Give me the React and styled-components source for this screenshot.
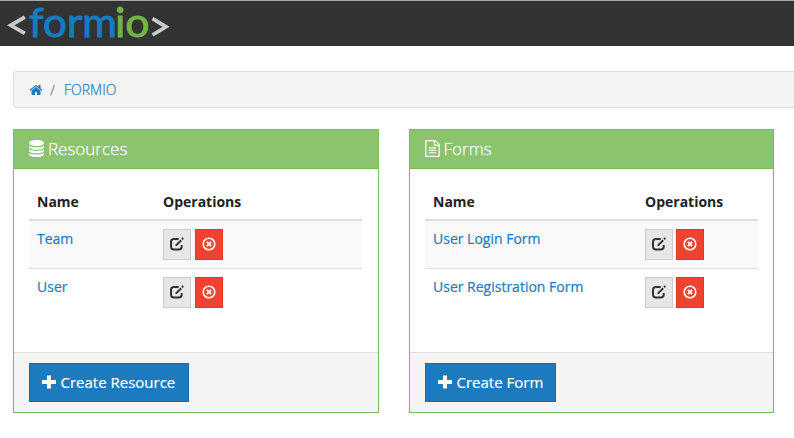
import React from "react";
import styled, { createGlobalStyle } from "styled-components";

const Global = createGlobalStyle`
  * { box-sizing: border-box; }
  html, body { margin: 0; padding: 0; background: #fff; overflow: hidden; }
  body { font: 400 14px/20px "Open Sans", sans-serif; color: #222; }
  a { color: #1c7abe; text-decoration: none; -webkit-text-stroke: 0.2px currentColor; }
  svg { display: block; flex: none; }
`;

const Page = styled.div`
  height: 438px;
  overflow: hidden;
`;
const Navbar = styled.header`
  height: 46px;
  background: #333;
  border-top: 1px solid #a3a8a5;
`;
const LogoArt = styled.svg`
  margin-top: -1px;
  overflow: visible;
  font-family: Lato, sans-serif;
  font-weight: 400;
`;
const Breadcrumb = styled.nav`
  display: flex;
  align-items: center;
  height: 37px;
  margin: 25px -10px 0 13px;
  padding-left: 15px;
  background: #f4f4f4;
  border: 1px solid #dcdcdc;
  border-radius: 3px;
  font-weight: 300;
`;
const Separator = styled.span`
  width: 5px;
  margin: 0 9px 0 7px;
  color: #888;
  font-weight: 400;
`;
const Crumb = styled.a`
  font-size: 14px;
`;
const Columns = styled.main`
  display: grid;
  grid-template-columns: 366px 365px;
  column-gap: 30px;
  margin: 21px 0 0 13px;
`;
const Panel = styled.section`
  display: flex;
  flex-direction: column;
  height: 284px;
  border: 1px solid #7cba5c;
`;
const PanelHeading = styled.h2`
  display: flex;
  align-items: center;
  gap: 4px;
  height: 39px;
  margin: 0;
  padding: 0 15px 1px ${(p) => p.$inset}px;
  background: #8cc36e;
  border-bottom: 1px solid #79b957;
  color: #fff;
  font-size: 17px;
  font-weight: 300;
  -webkit-text-stroke: 0.25px #fff;
`;
const PanelBody = styled.div`
  flex: 1;
  padding: 15px 15px 0 15px;
`;
const Grid = styled.div`
  display: grid;
  grid-template-columns: ${(p) => p.$name}px 1fr;
  max-width: 333px;
`;
const HeadRow = styled(Grid)`
  height: 37px;
  padding: 8px 8px 0;
  border-bottom: 2px solid #ddd;
  font-weight: 700;
`;
const Row = styled(Grid)`
  height: ${(p) => (p.$striped ? 47 : 48)}px;
  padding: 8px 8px 0;
  background: ${(p) => (p.$striped ? "#f9f9f9" : "#fff")};
  & + & { border-top: 1px solid #ddd; }
`;
const Actions = styled.div`
  display: flex;
  gap: ${(p) => p.$gap}px;
`;
const IconButton = styled.button`
  display: flex;
  align-items: center;
  justify-content: center;
  width: 28px;
  height: 31px;
  padding: 0 0 1px;
  color: ${(p) => (p.$danger ? "#fff" : "#333")};
  background: ${(p) => (p.$danger ? "#ef432f" : "#e7e7e7")};
  border: 1px solid ${(p) => (p.$danger ? "#df3925" : "#cbcbcb")};
`;
const PanelFooter = styled.footer`
  height: 60px;
  padding: 10px 15px;
  background: #f4f4f4;
  border-top: 1px solid #ddd;
`;
const CreateButton = styled.button`
  display: flex;
  align-items: center;
  gap: 4.5px;
  width: ${(p) => p.$w}px;
  height: 39px;
  padding: 0 0 1px 12px;
  color: #fff;
  background: #1c7abe;
  border: 1px solid #186ba7;
  font: 400 15px/20px "Open Sans", sans-serif;
  -webkit-text-stroke: 0.2px #fff;
  white-space: nowrap;
`;

function Logo() {
  return (
    <LogoArt width="180" height="46" viewBox="0 0 180 46">
      <g fill="none" stroke="#c9cacc" strokeWidth="3.8">
        <path d="M24.8 17.2L10.8 25.3L24.8 33.3" />
        <path d="M152.5 18.7L166 26.8L152.5 35" />
      </g>
      <text x="29" y="36.8" fontSize="40" fill="#147bc5" stroke="#147bc5" strokeWidth=".9" textLength="88" lengthAdjust="spacingAndGlyphs">form</text>
      <text x="115" y="36.8" fontSize="40" fill="#70b444" stroke="#70b444" strokeWidth=".9" textLength="34.500" lengthAdjust="spacingAndGlyphs">io</text>
      <circle cx="120.200" cy="10.200" r="3" fill="#70b444" />
    </LogoArt>
  );
}
const HomeIcon = () => (
  <svg width="14" height="14" viewBox="0 0 1792 1792" fill="#1c7abe">
    <path d="M1472 992v480q0 26-19 45t-45 19h-384v-384h-256v384h-384q-26 0-45-19t-19-45v-480q0-1 .5-3t.5-3l575-474 575 474q1 2 1 6zm223-69l-62 74q-8 9-21 11h-3q-13 0-21-7l-692-577-692 577q-12 8-24 7-13-2-21-11l-62-74q-8-10-7-23.5t11-21.5l719-599q32-26 76-26t76 26l244 204v-195q0-14 9-23t23-9h192q14 0 23 9t9 23v408l219 182q10 8 11 21.5t-7 23.5z" />
  </svg>
);
const DatabaseIcon = () => (
  <svg width="15" height="17" viewBox="128 0 1536 1792" fill="#fff">
    <path d="M896 768q237 0 443-43t325-127v170q0 69-103 128t-280 93.5-385 34.5-385-34.5-280-93.5-103-128v-170q119 84 325 127t443 43zm0 768q237 0 443-43t325-127v170q0 69-103 128t-280 93.5-385 34.5-385-34.5-280-93.5-103-128v-170q119 84 325 127t443 43zm0-384q237 0 443-43t325-127v170q0 69-103 128t-280 93.5-385 34.5-385-34.5-280-93.5-103-128v-170q119 84 325 127t443 43zm0-1152q208 0 385 34.5t280 93.5 103 128v128q0 69-103 128t-280 93.5-385 34.5-385-34.5-280-93.5-103-128v-128q0-69 103-128t280-93.5 385-34.5z" />
  </svg>
);
const FileIcon = () => (
  <svg width="15" height="17" viewBox="128 0 1536 1792" fill="#fff">
    <path d="M1596 380q28 28 48 76t20 88v1152q0 40-28 68t-68 28h-1344q-40 0-68-28t-28-68v-1600q0-40 28-68t68-28h896q40 0 88 20t76 48zm-444-244v376h376q-10-29-22-41l-313-313q-12-12-41-22zm384 1528v-1024h-416q-40 0-68-28t-28-68v-416h-768v1536h1280zm-1024-864q0-14 9-23t23-9h704q14 0 23 9t9 23v64q0 14-9 23t-23 9h-704q-14 0-23-9t-9-23v-64zm736 224q14 0 23 9t9 23v64q0 14-9 23t-23 9h-704q-14 0-23-9t-9-23v-64q0-14 9-23t23-9h704zm0 256q14 0 23 9t9 23v64q0 14-9 23t-23 9h-704q-14 0-23-9t-9-23v-64q0-14 9-23t23-9h704z" />
  </svg>
);
const EditIcon = () => (
  <svg width="14" height="14" viewBox="0 0 14 14" fill="none" stroke="currentColor">
    <path d="M8.7 2H4Q1 2 1 5v4.800Q1 12.500 4 12.500h4.700Q11.700 12.500 11.700 9.800V7.900" strokeWidth="2" />
    <path d="M6.3 8.1L11.2 3.2" strokeWidth="2" />
    <path d="M5.3 9.2l.5-2.2 1.7 1.7z" fill="currentColor" stroke="none" />
    <path d="M12 2.3L13.3 1" strokeWidth="2" />
  </svg>
);
const RemoveIcon = () => (
  <svg width="14" height="14" viewBox="0 0 14 14" fill="none" stroke="currentColor">
    <circle cx="7" cy="7" r="5.8" strokeWidth="1.6" />
    <path d="M4.900 4.900l4.200 4.200M9.100 4.900L4.900 9.100" strokeWidth="2" />
  </svg>
);
const PlusIcon = () => (
  <svg width="14" height="14" viewBox="0 0 14 14" fill="#fff">
    <path d="M5 .5h4V5h5v4H9v4.500H5V9H0V5h5z" />
  </svg>
);

function ListPanel({ icon, title, inset, items, nameWidth, gap, action, actionWidth }) {
  return (
    <Panel>
      <PanelHeading $inset={inset}>{icon}{title}</PanelHeading>
      <PanelBody>
        <HeadRow $name={nameWidth}><span>Name</span><span>Operations</span></HeadRow>
        {items.map((item, i) => (
          <Row key={item} $name={nameWidth} $striped={i % 2 === 0}>
            <a href="#">{item}</a>
            <Actions $gap={gap}>
              <IconButton aria-label="Edit"><EditIcon /></IconButton>
              <IconButton $danger aria-label="Delete"><RemoveIcon /></IconButton>
            </Actions>
          </Row>
        ))}
      </PanelBody>
      <PanelFooter>
        <CreateButton $w={actionWidth}><PlusIcon />{action}</CreateButton>
      </PanelFooter>
    </Panel>
  );
}

export default function App() {
  return (
    <Page>
      <Global />
      <Navbar><Logo /></Navbar>
      <Breadcrumb>
        <HomeIcon />
        <Separator>/</Separator>
        <Crumb href="#">FORMIO</Crumb>
      </Breadcrumb>
      <Columns>
        <ListPanel icon={<DatabaseIcon />} title="Resources" inset={15} items={["Team", "User"]} nameWidth={126} gap={4} action="Create Resource" actionWidth={160} />
        <ListPanel icon={<FileIcon />} title="Forms" inset={14.5} items={["User Login Form", "User Registration Form"]} nameWidth={212} gap={3} action="Create Form" actionWidth={131} />
      </Columns>
    </Page>
  );
}
